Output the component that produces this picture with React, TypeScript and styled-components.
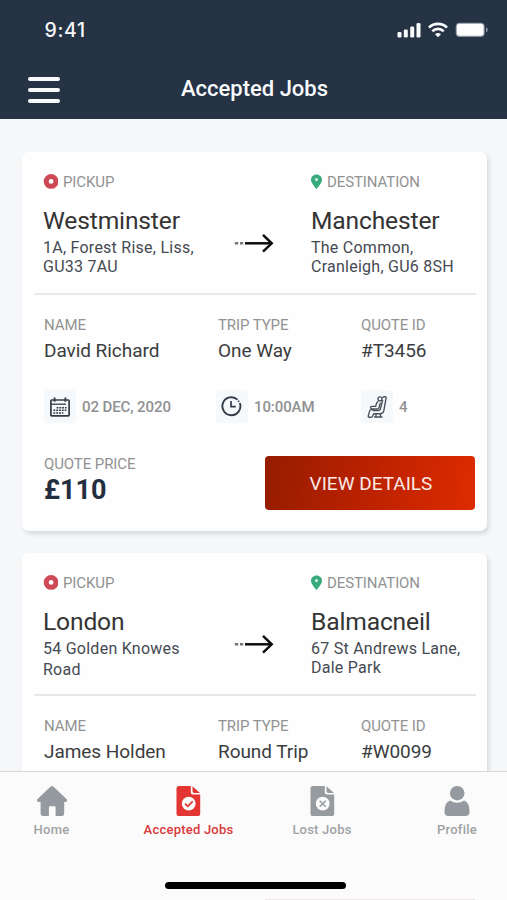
import React from 'react';
import styled, { createGlobalStyle } from 'styled-components';

const GlobalStyle = createGlobalStyle`
  *, *::before, *::after { box-sizing: border-box; }
  body { margin: 0; background: #f5f7f9; font-family: Roboto, sans-serif; }
  button { font-family: inherit; }
  svg { display: block; flex: none; }
`;

const Screen = styled.div`
  width: 507px;
  height: 900px;
  display: flex;
  flex-direction: column;
  overflow: hidden;
  background: #f5f7f9;
`;

const Header = styled.header`
  flex: none;
  height: 119px;
  background: #253345;
  color: #f8fafc;
`;

const StatusBar = styled.div`
  height: 60px;
  padding: 0 18px 0 44.5px;
  display: flex;
  align-items: center;
  justify-content: space-between;
`;

const Clock = styled.time`
  font: 500 19.5px/24px Inter, sans-serif;
  letter-spacing: 0.7px;
`;

const StatusIcons = styled.div`
  display: flex;
  align-items: center;
  gap: 7px;
`;

const TitleBar = styled.div`
  height: 59px;
  padding: 0 28px;
  display: grid;
  grid-template-columns: 32px 1fr 32px;
  align-items: center;
`;

const MenuButton = styled.button`
  margin: 1px 0 0;
  padding: 0;
  border: 0;
  background: none;
  display: flex;
  flex-direction: column;
  gap: 7px;
`;

const MenuLine = styled.span`
  width: 32px;
  height: 4px;
  border-radius: 2px;
  background: #f8fafc;
`;

const Title = styled.h1`
  margin: -2px 0 0;
  padding-left: 2px;
  text-align: center;
  font-size: 22px;
  line-height: 26px;
  font-weight: 500;
`;

const JobList = styled.main`
  flex: 1;
  min-height: 0;
  overflow: hidden;
  padding: 33px 20px 0 22px;
  display: flex;
  flex-direction: column;
  gap: 22px;
`;

const Card = styled.article`
  flex: none;
  height: 379px;
  padding: 20px 12px 0;
  border-radius: 7px;
  background: #fefefe;
  box-shadow: 2px 3px 4px rgba(70, 80, 92, 0.17);
`;

const Route = styled.section`
  height: 123px;
  margin: 0 -1px -2px 0;
  padding-left: 9px;
  border-bottom: 2px solid #e7e8ea;
  display: grid;
  grid-template-columns: 190px 78px 1fr;
`;

const PlaceLabel = styled.div`
  height: 20px;
  display: flex;
  align-items: center;
  gap: 5px;
`;

const Label = styled.div`
  color: #929292;
  font-size: 15px;
  line-height: 20px;
  letter-spacing: -0.1px;
  white-space: nowrap;
`;

const City = styled.h2`
  margin: 14px 0 0;
  color: #343434;
  font-size: 24.6px;
  line-height: 30px;
  font-weight: 400;
  letter-spacing: -0.15px;
`;

const Address = styled.p<{ $lineHeight: number }>`
  margin: ${(p) => (p.$lineHeight > 19 ? 1 : 2)}px 0 0;
  color: #454a52;
  font-size: 16px;
  line-height: ${(p) => p.$lineHeight}px;
  letter-spacing: 0.25px;
  white-space: pre-line;
`;

const ArrowCell = styled.div`
  padding: 61px 0 0 1px;
`;

const DetailGrid = styled.section`
  padding: 22px 0 0 10px;
  display: grid;
  grid-template-columns: 174px 143px 1fr;
`;

const Value = styled.div`
  margin-top: 4px;
  color: #3b3d40;
  font-size: 19px;
  line-height: 24px;
  letter-spacing: -0.05px;
  white-space: nowrap;
`;

const FactGrid = styled.section`
  margin-top: 27px;
  padding-left: 10px;
  display: grid;
  grid-template-columns: 172px 145px 1fr;
`;

const Fact = styled.div`
  height: 33px;
  display: flex;
  align-items: center;
  gap: 6px;
  color: #909192;
  font-size: 15px;
  font-weight: 500;
  letter-spacing: -0.1px;
`;

const IconTile = styled.span`
  width: 32px;
  height: 33px;
  border-radius: 3px;
  background: #f6f9fb;
  display: grid;
  place-items: center;
`;

const Footer = styled.footer`
  margin-top: 31px;
  padding-left: 10px;
  display: flex;
  justify-content: space-between;
`;

const Price = styled.div`
  color: #232f40;
  font-size: 27px;
  line-height: 32px;
  font-weight: 700;
`;

const DetailsButton = styled.button`
  width: 210px;
  height: 54px;
  margin: 1.5px 0 0;
  padding: 2px 0 0 2px;
  border: 0;
  border-radius: 4px;
  background: linear-gradient(100deg, #951c00 0%, #b82100 45%, #de2b00 100%);
  color: #fbe9e5;
  font-size: 19px;
  line-height: 24px;
`;

const TabBar = styled.nav`
  flex: none;
  height: 129px;
  border-top: 1px solid #d5d7d9;
  background: #fbfbfb;
  display: flex;
  flex-direction: column;
  align-items: center;
`;

const Tabs = styled.div`
  width: 100%;
  height: 110px;
  display: grid;
  grid-template-columns: 103px 171px 96px 37px 100px;
`;

const Tab = styled.a<{ $active?: boolean }>`
  padding-top: 12.5px;
  display: flex;
  flex-direction: column;
  align-items: center;
  gap: 3px;
  color: ${(p) => (p.$active ? '#d9383a' : '#a0a2a4')};
  font-size: 13px;
  line-height: 20px;
  font-weight: 500;
  letter-spacing: 0.22px;
  &:last-child { grid-column: 5; }
`;

const HomeIndicator = styled.div`
  width: 181px;
  height: 7px;
  margin-left: 3px;
  border-radius: 4px;
  background: #000;
`;

const BottomEdge = styled.div`
  width: 210px;
  height: 1px;
  margin: 10px 32px 0 auto;
  background: #e9e6e5;
`;

const Signal = () => (
  <svg width="24" height="16" viewBox="0 0 24 16" fill="#f8fafc">
    <rect x="0.5" y="10" width="4" height="5.500" rx="1.300" />
    <rect x="6.800" y="7.500" width="4" height="8" rx="1.300" />
    <rect x="13.200" y="4.500" width="4" height="11" rx="1.300" />
    <rect x="19.500" y="1" width="4" height="14.500" rx="1.300" />
  </svg>
);

const Wifi = () => (
  <svg width="20" height="16" viewBox="0 0 20 16" fill="none" stroke="#f8fafc" strokeWidth="2.7">
    <path d="M1 5.6C6 .7 14 .7 19 5.6" />
    <path d="M4.3 9.2c3.3-3.1 8.1-3.1 11.4 0" />
    <path d="M7 12.2c1.8-1.5 4.2-1.5 6 0l-3 3z" fill="#f8fafc" stroke="none" />
  </svg>
);

const Battery = () => (
  <svg width="34" height="16" viewBox="0 0 34 16">
    <rect x="0.7" y="0.7" width="29" height="14.2" rx="4" fill="#8a94a0" />
    <rect x="1.8" y="1.8" width="26.800" height="12" rx="2.800" fill="#fff" />
    <path d="M31 5.3c2.4.7 2.4 4.4 0 5z" fill="#8a94a0" />
  </svg>
);

const PickupDot = () => (
  <svg width="15" height="16" viewBox="0 0 15 16">
    <circle cx="8.1" cy="7.400" r="4.900" fill="#fff" stroke="#cf4955" strokeWidth="5" />
  </svg>
);

const Pin = () => (
  <svg width="11" height="16" viewBox="0 0 11 16">
    <path d="M5.5.4C2.3.4 0 2.7 0 5.7 0 9 3.4 12 5.5 15.3 7.600 12 11 9 11 5.700 11 2.700 8.700.4 5.500.4z" fill="#37ab7b" />
    <circle cx="5.500" cy="5.500" r="1.500" fill="#dff3ea" />
  </svg>
);

const Arrow = () => (
  <svg width="40" height="20" viewBox="0 0 40 20" fill="none" stroke="#0d0d0d">
    <path d="M.8 10.300h3.400M6 10.300h3.200" stroke="#777" strokeWidth="2.400" />
    <path d="M11 10.300h26" strokeWidth="2.500" />
    <path d="M29 1.800l8.700 8.500-8.700 8.300" strokeWidth="2.500" />
  </svg>
);

const CalendarIcon = () => (
  <svg width="20" height="20" viewBox="0 0 20 20" fill="none" stroke="#333d49">
    <rect x="0.900" y="3" width="18.200" height="15.900" rx="0.800" strokeWidth="1.700" />
    <path d="M4.600.6v4.200M15.400.6v4.200" strokeWidth="1.900" />
    <path d="M1 7.200h15" strokeWidth="1.300" />
    <path d="M6.600 10.700h10M3.400 13.300h13M3.400 15.900h10" strokeWidth="1.500" strokeDasharray="1.900 0.900" />
  </svg>
);

const ClockIcon = () => (
  <svg width="22" height="21" viewBox="0 0 22 21" fill="none" stroke="#333d49" strokeWidth="1.900">
    <path d="M16.500 3.600A9 9 0 1 0 18.800 7M13.300 2l1.600.7M17.200 4.700l.8 1.100" />
    <path d="M10 5v5.700h4.800" strokeWidth="1.700" />
  </svg>
);

const SeatIcon = () => (
  <svg width="20" height="22" viewBox="0 0 20 22" fill="none" stroke="#46505b" strokeWidth="1.350" strokeLinejoin="round" strokeLinecap="round">
    <path d="M16 1.600q.3-.9 1.300-.9h.8q1.200 0 1 1.200l-2.200 12.500q-.6 3.300-3.900 3.300H7.500q-1 0-1.400 1l-.5 1.500q-.4 1-1.500 1H2.300q-1.400 0-1-1.400l1.300-4.700q.4-1.500 2-1.500H7" />
    <circle cx="13" cy="2.900" r="2" />
    <path d="M10.900 5.900q-1.300.4-1.500 1.700l-.7 2.700H5q-1.500 0-1.500 1.300t1.500 1.300h5.500q1.200 0 1.500-1.200l1.300-4.600M15.600 4.500l-2 7.900q-.4 2.100-2.600 2.100H6.200" />
    <path d="M9 18v3M13.500 18v3M7.500 21h7.500" />
  </svg>
);

const HomeIcon = () => (
  <svg width="32" height="32" viewBox="0 0 32 32" fill="#949aa0">
    <path d="M14.700 1.600q1.300-1.200 2.600 0L30.500 14q1.400 1.500 0 2.400-.6.600-1.500.6h-.8v11.700q0 2.400-2.400 2.400h-6.200V22.500q0-1.200-1.200-1.200h-4.300q-1.200 0-1.200 1.200v8.600H7q-2.400 0-2.400-2.400V17H3q-1.200 0-1.800-.8-.7-1.100.4-2.200z" />
  </svg>
);

const DocumentIcon = ({ active, children }: { active?: boolean; children: React.ReactNode }) => (
  <svg width="25" height="32" viewBox="0 0 25 32" fill={active ? '#e33531' : '#969ba0'}>
    <path d="M3 1h11.800v6.600q0 2 2 2h7.400v18.800q0 2.600-2.600 2.600H3Q.5 31 .5 28.400V3.600Q.5 1 3 1zM16.500 1.300l7.500 6.600h-5.600q-1.900 0-1.900-1.900z" />
    <circle cx="12.700" cy="18.700" r="6.900" fill="#fbfbfb" />
    <g fill="none" stroke={active ? '#e33531' : '#969ba0'} strokeWidth="1.800">{children}</g>
  </svg>
);

const ProfileIcon = () => (
  <svg width="26" height="32" viewBox="0 0 26 32" fill="#949aa0">
    <circle cx="13.200" cy="8.200" r="7.300" />
    <path d="M6 15.500q7 4.500 14.200 0Q25.500 17.500 25.500 26v1q0 4-4 4H4.500q-4 0-4-4v-1q0-8.500 5.500-10.500z" />
  </svg>
);

interface Place { city: string; address: string; lineHeight: number }
interface Booking { date: string; time: string; seats: string; price: string }
interface Job { from: Place; to: Place; name: string; trip: string; quoteId: string; booking?: Booking }

const jobs: Job[] = [
  {
    from: { city: 'Westminster', address: '1A, Forest Rise, Liss,\nGU33 7AU', lineHeight: 19 },
    to: { city: 'Manchester', address: 'The Common,\nCranleigh, GU6 8SH', lineHeight: 19 },
    name: 'David Richard', trip: 'One Way', quoteId: '#T3456',
    booking: { date: '02 DEC, 2020', time: '10:00AM', seats: '4', price: '£110' },
  },
  {
    from: { city: 'London', address: '54 Golden Knowes\nRoad', lineHeight: 21 },
    to: { city: 'Balmacneil', address: '67 St Andrews Lane,\nDale Park', lineHeight: 19 },
    name: 'James Holden', trip: 'Round Trip', quoteId: '#W0099',
  },
];

const Stop = ({ place, label, icon }: { place: Place; label: string; icon: React.ReactNode }) => (
  <div>
    <PlaceLabel>{icon}<Label>{label}</Label></PlaceLabel>
    <City>{place.city}</City>
    <Address $lineHeight={place.lineHeight}>{place.address}</Address>
  </div>
);

const Detail = ({ label, value }: { label: string; value: string }) => (
  <div><Label>{label}</Label><Value>{value}</Value></div>
);

const BookingInfo = ({ booking }: { booking: Booking }) => (
  <>
    <FactGrid>
      <Fact><IconTile><CalendarIcon /></IconTile>{booking.date}</Fact>
      <Fact><IconTile><ClockIcon /></IconTile>{booking.time}</Fact>
      <Fact><IconTile><SeatIcon /></IconTile>{booking.seats}</Fact>
    </FactGrid>
    <Footer>
      <div><Label>QUOTE PRICE</Label><Price>{booking.price}</Price></div>
      <DetailsButton>VIEW DETAILS</DetailsButton>
    </Footer>
  </>
);

const JobCard = ({ job }: { job: Job }) => (
  <Card>
    <Route>
      <Stop place={job.from} label="PICKUP" icon={<PickupDot />} />
      <ArrowCell><Arrow /></ArrowCell>
      <Stop place={job.to} label="DESTINATION" icon={<Pin />} />
    </Route>
    <DetailGrid>
      <Detail label="NAME" value={job.name} />
      <Detail label="TRIP TYPE" value={job.trip} />
      <Detail label="QUOTE ID" value={job.quoteId} />
    </DetailGrid>
    {job.booking && <BookingInfo booking={job.booking} />}
  </Card>
);

export default function App() {
  return (
    <Screen>
      <GlobalStyle />
      <Header>
        <StatusBar>
          <Clock>9:41</Clock>
          <StatusIcons><Signal /><Wifi /><Battery /></StatusIcons>
        </StatusBar>
        <TitleBar>
          <MenuButton aria-label="Menu"><MenuLine /><MenuLine /><MenuLine /></MenuButton>
          <Title>Accepted Jobs</Title>
        </TitleBar>
      </Header>
      <JobList>{jobs.map((job) => <JobCard key={job.name} job={job} />)}</JobList>
      <TabBar>
        <Tabs>
          <Tab><HomeIcon />Home</Tab>
          <Tab $active><DocumentIcon active><path d="M9 18.700l2.800 2.600 4.900-5" /></DocumentIcon>Accepted Jobs</Tab>
          <Tab><DocumentIcon><path d="M9.700 15.700l6 6M15.700 15.700l-6 6" strokeWidth="1.500" /></DocumentIcon>Lost Jobs</Tab>
          <Tab><ProfileIcon />Profile</Tab>
        </Tabs>
        <HomeIndicator />
        <BottomEdge />
      </TabBar>
    </Screen>
  );
}
